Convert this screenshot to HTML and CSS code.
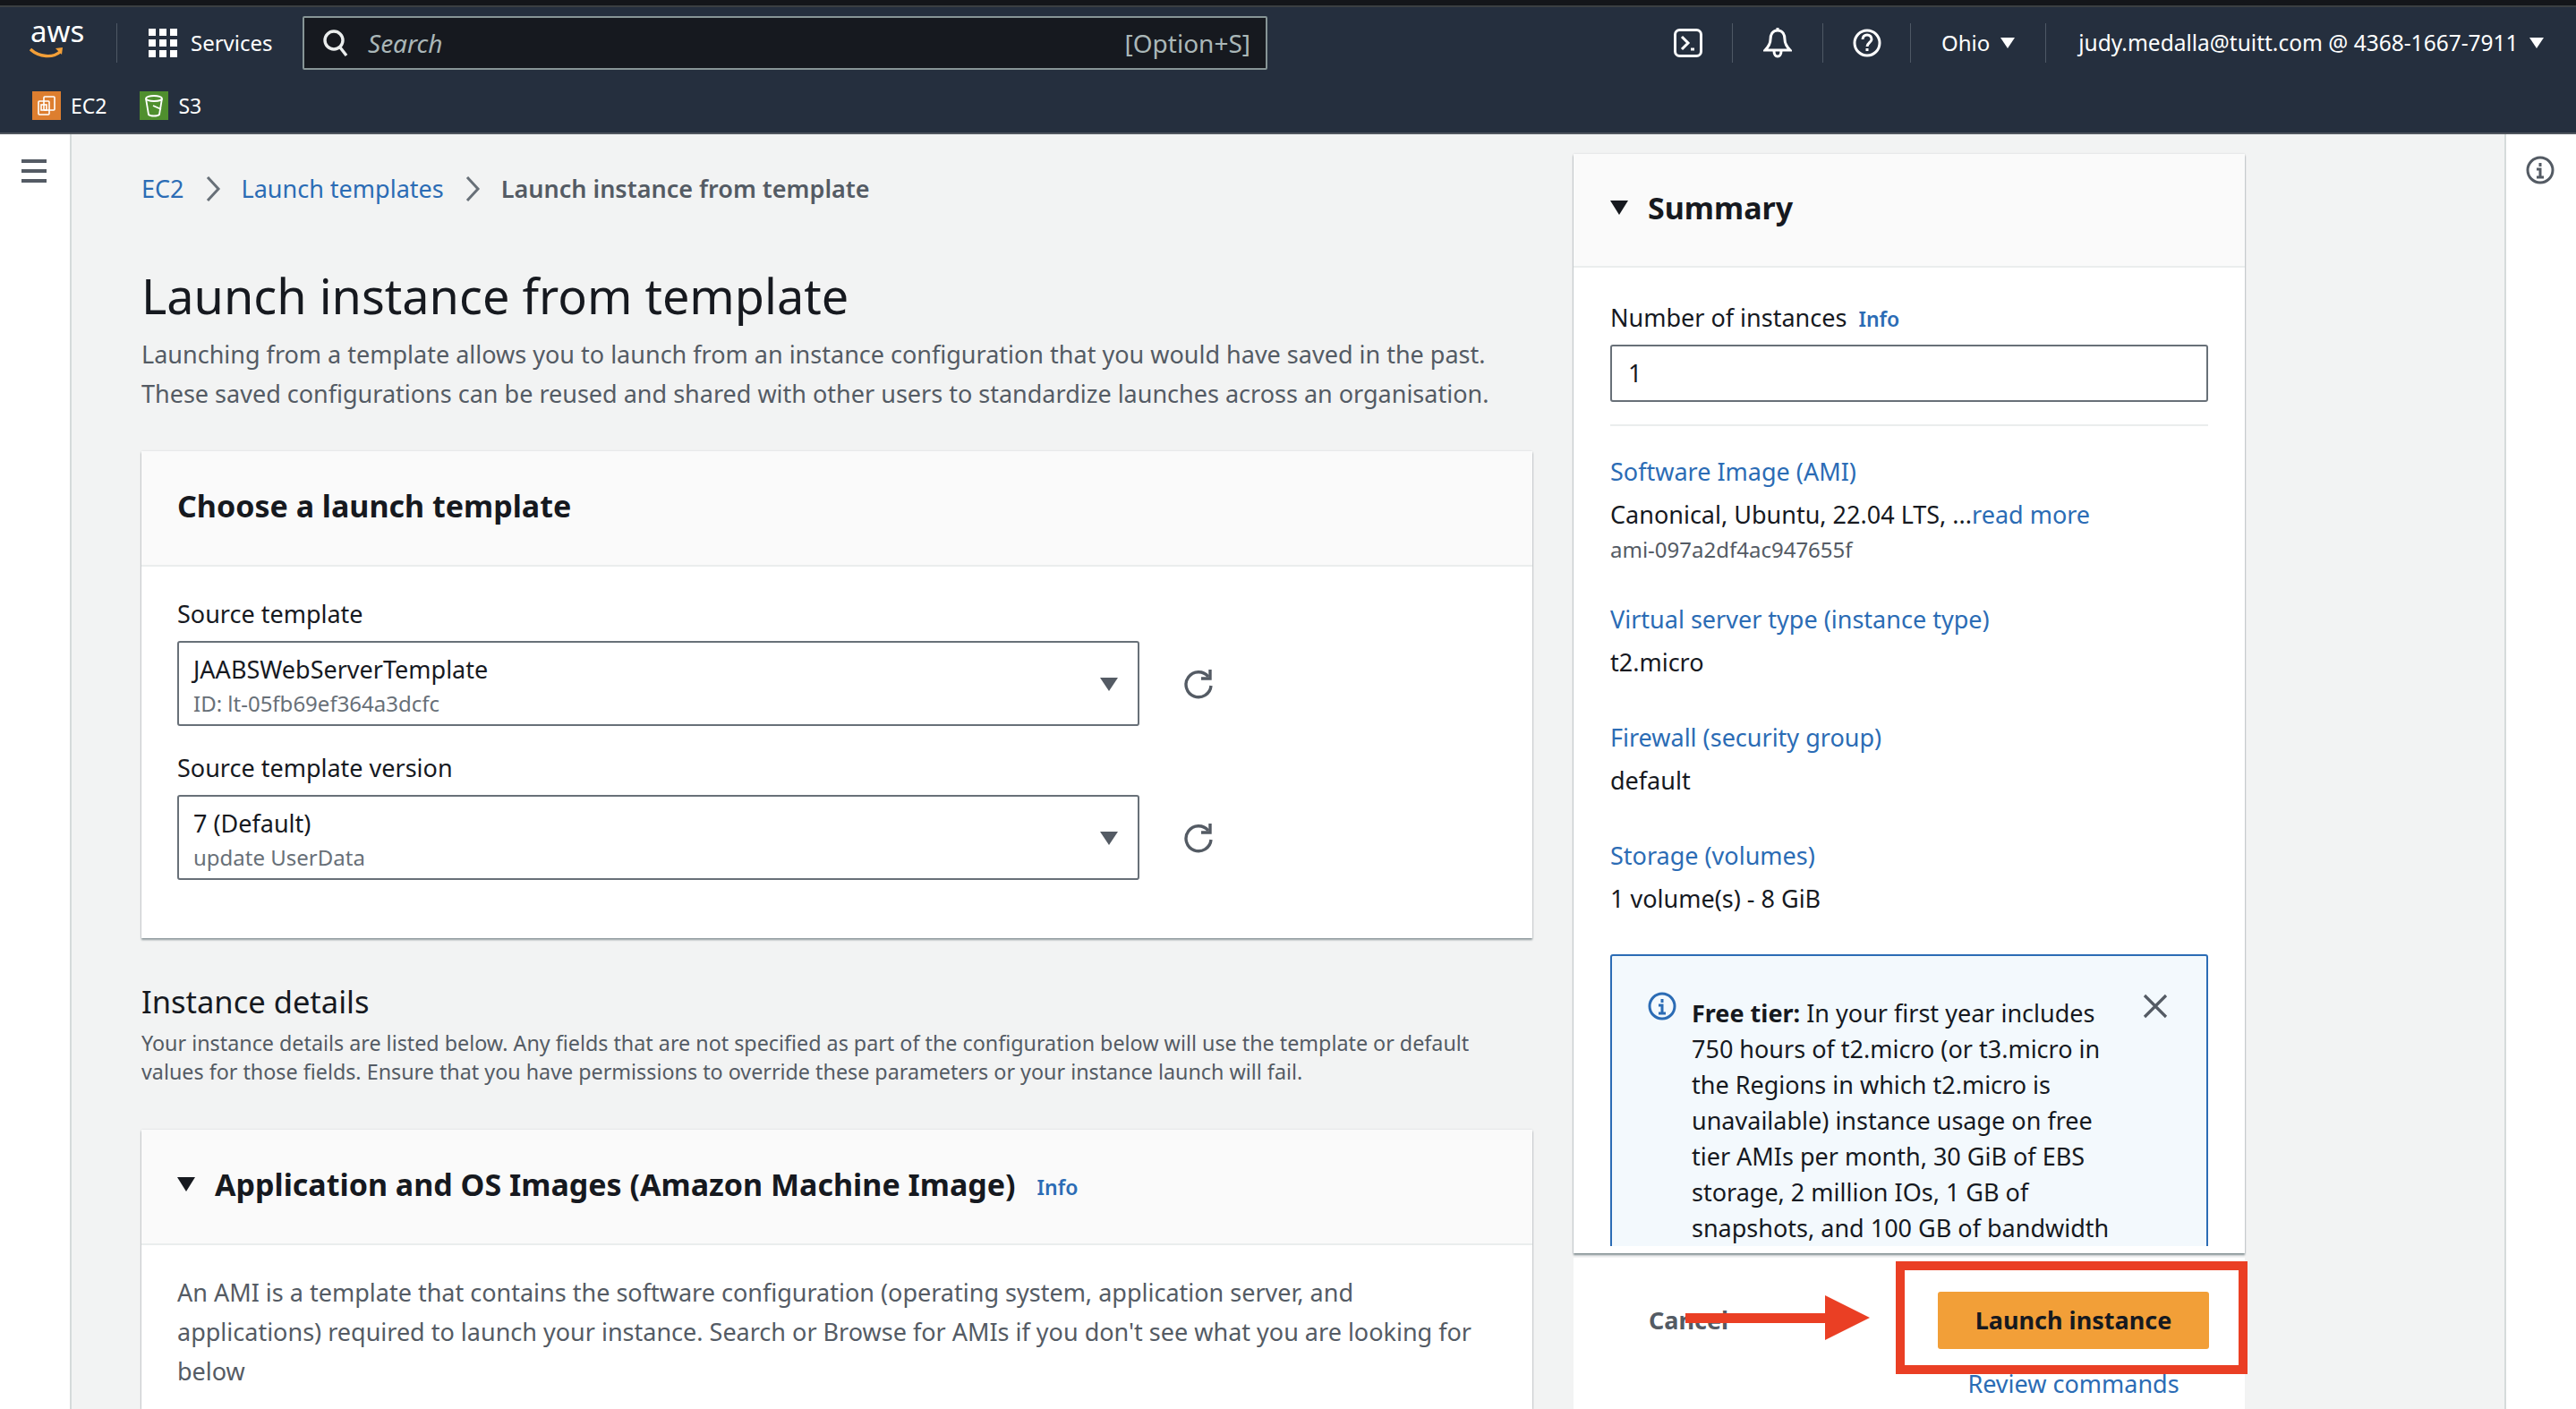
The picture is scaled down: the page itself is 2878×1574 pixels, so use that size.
FILE: index.html
```html
<!DOCTYPE html>
<html lang="en">
<head>
    <meta charset="UTF-8">
    <meta name="viewport" content="width=device-width, initial-scale=1.0">
    <title>Launch instance from template</title>
    <link rel="stylesheet" href="styles.css">
</head>
<body>

<div class="top-strip"></div>

<header class="nav">
    <div class="nav-row">
        <div class="logo">
            <span class="logo-text">aws</span>
            <svg class="logo-smile" width="38" height="16" viewBox="0 0 38 16"><path d="M1 2c10 9 25 10 33 3" fill="none" stroke="#f29f38" stroke-width="3.4"/><path d="M29 1l8-1-1 8z" fill="#f29f38"/></svg>
        </div>
        <svg class="grid-icon" width="33" height="32" viewBox="0 0 33 32" fill="#fff"><rect x="0" y="0" width="8" height="8"/><rect x="12" y="0" width="8" height="8"/><rect x="24" y="0" width="8" height="8"/><rect x="0" y="12" width="8" height="8"/><rect x="12" y="12" width="8" height="8"/><rect x="24" y="12" width="8" height="8"/><rect x="0" y="24" width="8" height="8"/><rect x="12" y="24" width="8" height="8"/><rect x="24" y="24" width="8" height="8"/></svg>
        <span class="services">Services</span>
        <div class="search">
            <svg width="30" height="32" viewBox="0 0 30 32" fill="none" stroke="#eaeded" stroke-width="3.4"><circle cx="13" cy="13" r="10"/><path d="M20 21l7 9"/></svg>
            <span class="search-text">Search</span>
            <span class="search-key">[Option+S]</span>
        </div>
        <div class="nav-right">
            <svg class="nav-icon-term" width="32" height="32" viewBox="0 0 32 32" fill="none" stroke="#fff" stroke-width="3"><rect x="1.5" y="1.5" width="29" height="29" rx="5"/><path d="M9 9l7 7-7 7"/><path d="M19 23h4"/></svg>
            <span class="nav-sep sep-term"></span>
            <svg class="nav-icon-bell" width="32" height="34" viewBox="0 0 32 34" fill="none" stroke="#fff" stroke-width="3"><path d="M16 3c-6 0-8 5-8 10 0 5-2 8-6 12h28c-4-4-6-7-6-12 0-5-2-10-8-10z"/><path d="M12 26c0 4 2 6 4 6s4-2 4-6"/><path d="M16 0v3"/></svg>
            <span class="nav-sep sep-bell"></span>
            <svg class="nav-icon-help" width="32" height="34" viewBox="0 0 32 32" fill="none" stroke="#fff" stroke-width="3"><circle cx="16" cy="16" r="14"/><path d="M11 12c0-3 2-5 5-5s5 2 5 5-5 4-5 8"/><path d="M16 22v3"/></svg>
            <span class="nav-sep sep-help"></span>
            <span class="region">Ohio</span>
            <span class="caret-white caret-region"></span>
            <span class="nav-sep sep-region"></span>
            <span class="account">judy.medalla@tuitt.com @ 4368-1667-7911</span>
            <span class="caret-white caret-account"></span>
        </div>
    </div>
    <div class="fav-row">
        <span class="fav-icon fav-ec2">
            <svg width="24" height="24" viewBox="0 0 24 24" fill="none" stroke="#fff" stroke-width="1.6"><rect x="9" y="2" width="12" height="15" rx="1"/><rect x="3" y="7" width="12" height="15" rx="1"/><rect x="6" y="11" width="6" height="6"/></svg>
        </span>
        <span class="fav-label">EC2</span>
        <span class="fav-icon fav-s3">
            <svg width="24" height="26" viewBox="0 0 24 26" fill="none" stroke="#fff" stroke-width="1.8"><ellipse cx="12" cy="5" rx="9" ry="3"/><path d="M3 5l3 18c2 2 10 2 12 0l3-18"/><path d="M11 13l9 4"/></svg>
        </span>
        <span class="fav-label">S3</span>
    </div>
</header>

<div class="layout">
    <aside class="rail rail-left">
        <svg class="rail-icon" width="28" height="28" viewBox="0 0 28 28" fill="#545b64"><rect y="0" width="28" height="4"/><rect y="11" width="28" height="4"/><rect y="22" width="28" height="4"/></svg>
    </aside>

    <main class="content">
        <nav class="breadcrumb">
            <a class="link">EC2</a>
            <svg class="crumb-sep" width="18" height="30" viewBox="0 0 18 30" fill="none" stroke="#687078" stroke-width="3"><path d="M3 2l12 13L3 28"/></svg>
            <a class="link">Launch templates</a>
            <svg class="crumb-sep" width="18" height="30" viewBox="0 0 18 30" fill="none" stroke="#687078" stroke-width="3"><path d="M3 2l12 13L3 28"/></svg>
            <span class="crumb-current">Launch instance from template</span>
        </nav>

        <h1>Launch instance from template</h1>
        <p class="intro">Launching from a template allows you to launch from an instance configuration that you would have saved in the past.<br>These saved configurations can be reused and shared with other users to standardize launches across an organisation.</p>

        <section class="card card-template">
            <div class="card-header">
                <h2 class="card-title">Choose a launch template</h2>
            </div>
            <div class="card-body">
                <div class="field-label">Source template</div>
                <div class="select-row">
                    <div class="select">
                        <div class="select-main">JAABSWebServerTemplate</div>
                        <div class="select-sub">ID: lt-05fb69ef364a3dcfc</div>
                        <span class="caret-grey"></span>
                    </div>
                    <svg class="refresh" width="34" height="36" viewBox="0 0 34 36" fill="none" stroke="#545b64" stroke-width="3.4"><path d="M27 10a14 14 0 1 0 3 10"/><path d="M29 2v10H19"/></svg>
                </div>
                <div class="field-label label-second">Source template version</div>
                <div class="select-row">
                    <div class="select">
                        <div class="select-main">7 (Default)</div>
                        <div class="select-sub">update UserData</div>
                        <span class="caret-grey"></span>
                    </div>
                    <svg class="refresh" width="34" height="36" viewBox="0 0 34 36" fill="none" stroke="#545b64" stroke-width="3.4"><path d="M27 10a14 14 0 1 0 3 10"/><path d="M29 2v10H19"/></svg>
                </div>
            </div>
        </section>

        <h2 class="section-title">Instance details</h2>
        <p class="section-desc">Your instance details are listed below. Any fields that are not specified as part of the configuration below will use the template or default<br>values for those fields. Ensure that you have permissions to override these parameters or your instance launch will fail.</p>

        <section class="card card-ami">
            <div class="card-header">
                <span class="caret-black"></span>
                <h2 class="card-title">Application and OS Images (Amazon Machine Image)</h2>
                <a class="info-link info-ami">Info</a>
            </div>
            <div class="card-body">
                <p class="ami-text">An AMI is a template that contains the software configuration (operating system, application server, and<br>applications) required to launch your instance. Search or Browse for AMIs if you don't see what you are looking for<br>below</p>
            </div>
        </section>
    </main>

    <aside class="summary-col">
        <section class="summary">
            <div class="summary-header">
                <span class="caret-black"></span>
                <h2 class="summary-title">Summary</h2>
            </div>
            <div class="summary-scroll">
                <div class="field-label">Number of instances <a class="info-link">Info</a></div>
                <div class="number-input">1</div>
                <hr class="summary-rule">

                <a class="link summary-link link-first">Software Image (AMI)</a>
                <div class="summary-value">Canonical, Ubuntu, 22.04 LTS, ...<a class="link">read more</a></div>
                <div class="summary-sub">ami-097a2df4ac947655f</div>

                <a class="link summary-link link-type">Virtual server type (instance type)</a>
                <div class="summary-value">t2.micro</div>

                <a class="link summary-link link-next">Firewall (security group)</a>
                <div class="summary-value">default</div>

                <a class="link summary-link link-next">Storage (volumes)</a>
                <div class="summary-value">1 volume(s) - 8 GiB</div>

                <div class="free-tier">
                    <svg class="free-icon" width="32" height="32" viewBox="0 0 32 32" fill="none" stroke="#2b6cb5" stroke-width="3"><circle cx="16" cy="16" r="14"/><path d="M16 8v4" /><path d="M12 15h4v9M12 24h8"/></svg>
                    <p class="free-text"><b>Free tier:</b> In your first year includes<br>750 hours of t2.micro (or t3.micro in<br>the Regions in which t2.micro is<br>unavailable) instance usage on free<br>tier AMIs per month, 30 GiB of EBS<br>storage, 2 million IOs, 1 GB of<br>snapshots, and 100 GB of bandwidth</p>
                    <svg class="free-close" width="28" height="28" viewBox="0 0 28 28" fill="none" stroke="#545b64" stroke-width="3.2"><path d="M2 2l24 24M26 2L2 26"/></svg>
                </div>
            </div>
        </section>
        <div class="summary-footer">
            <div class="footer-row">
                <span class="cancel">Cancel</span>
                <button class="launch">Launch instance</button>
            </div>
            <a class="link review">Review commands</a>
        </div>
    </aside>

    <aside class="rail rail-right">
        <svg class="rail-icon" width="32" height="32" viewBox="0 0 32 32" fill="none" stroke="#545b64" stroke-width="3"><circle cx="16" cy="16" r="14"/><path d="M16 8v4"/><path d="M12 15h4v9M12 24h8"/></svg>
    </aside>
</div>

<!-- red annotation drawn over the screenshot -->
<div class="note-box"></div>
<svg class="note-arrow" width="206" height="50" viewBox="0 0 206 50" fill="#ea3f24"><rect x="0" y="20" width="157" height="11"/><polygon points="156,0 206,25 156,50"/></svg>

</body>
</html>
```

FILE: styles.css
```css
* {
    box-sizing: border-box;
}
html, body {
    margin: 0;
    height: 1574px;
    overflow: hidden;
}
body {
    position: relative;
    font-family: "Noto Sans", Arial, sans-serif;
    font-size: 27px;
    line-height: 44px;
    color: #16191f;
    background-color: #f2f3f3;
}
h1, h2, p {
    margin: 0;
    font-weight: normal;
}
.link {
    color: #2b6cb5;
}

/* top bar */
.top-strip {
    height: 8px;
    background-color: #14161a;
    border-bottom: 2px solid #3b3f42;
}
.nav {
    height: 142px;
    background-color: #252f3e;
    border-bottom: 2px solid #50565e;
    color: #fff;
}
.nav-row {
    display: flex;
    align-items: center;
    height: 76px;
    padding: 4px 0 0 0;
}
.logo {
    position: relative;
    width: 131px;
    height: 44px;
    margin-left: 0;
    border-right: 1px solid #4e5865;
}
.logo-text {
    position: absolute;
    left: 34px;
    top: -11px;
    font-size: 33px;
    line-height: 40px;
}
.logo-smile {
    position: absolute;
    left: 33px;
    top: 27px;
}
.grid-icon {
    margin-left: 35px;
}
.services {
    margin-left: 14px;
    width: 125px;
    font-size: 24px;
}
.search {
    display: flex;
    align-items: center;
    width: 1078px;
    height: 60px;
    padding: 0 17px 0 20px;
    background-color: #16191f;
    border: 2px solid #879596;
    border-radius: 2px;
}
.search-text {
    margin-left: 21px;
    font-style: italic;
    font-size: 28px;
    color: #aab7b8;
}
.search-key {
    margin-left: auto;
    font-size: 28px;
    color: #aab7b8;
}
.nav-right {
    display: flex;
    align-items: center;
    margin-left: 454px;
    font-size: 24px;
}
.nav-sep {
    width: 1px;
    height: 44px;
    background-color: #4e5865;
}
.sep-term {
    margin-left: 33px;
}
.nav-icon-bell {
    margin-left: 34px;
}
.sep-bell {
    margin-left: 34px;
}
.nav-icon-help {
    margin-left: 33px;
}
.sep-help {
    margin-left: 32px;
}
.region {
    margin-left: 34px;
}
.caret-region {
    margin-left: 12px;
}
.sep-region {
    margin-left: 34px;
}
.account {
    margin-left: 36px;
    font-size: 24.5px;
    white-space: nowrap;
}
.caret-account {
    margin-left: 12px;
}
.caret-white {
    width: 0;
    height: 0;
    border-left: 8px solid transparent;
    border-right: 8px solid transparent;
    border-top: 12px solid #fff;
}
.fav-row {
    display: flex;
    align-items: center;
    height: 32px;
    margin-top: 18px;
    padding-left: 36px;
    font-size: 23px;
}
.fav-icon {
    display: flex;
    align-items: center;
    justify-content: center;
    width: 32px;
    height: 32px;
}
.fav-ec2 {
    background-color: #dd7e2f;
}
.fav-s3 {
    background-color: #4f8f2e;
}
.fav-label {
    margin-left: 11px;
    margin-right: 37px;
}

/* page columns */
.layout {
    display: flex;
    height: 1424px;
}
.rail {
    background-color: #fff;
    flex: none;
}
.rail-icon {
    display: block;
}
.rail-left {
    width: 80px;
    padding: 28px 0 0 24px;
    border-right: 2px solid #d5dbdb;
}
.rail-right {
    width: 80px;
    margin-left: 290px;
    padding: 24px 0 0 22px;
    border-left: 2px solid #d5dbdb;
}
.content {
    flex: none;
    width: 1632px;
    padding-left: 78px;
    padding-top: 39px;
}

/* breadcrumb and heading */
.breadcrumb {
    display: flex;
    align-items: center;
    height: 44px;
    white-space: nowrap;
}
.crumb-sep {
    margin: 0 23px;
}
.crumb-current {
    font-weight: 600;
    color: #545b64;
}
h1 {
    margin-top: 61px;
    font-size: 54px;
    line-height: 72px;
}
.intro {
    margin-top: 8px;
    color: #545b64;
    white-space: nowrap;
}

/* cards */
.card {
    width: 1554px;
    background-color: #fff;
    box-shadow: 0 2px 2px rgba(0, 28, 36, 0.4), 0 0 2px rgba(0, 28, 36, 0.12);
}
.card-template {
    margin-top: 42px;
    height: 544px;
}
.card-ami {
    margin-top: 49px;
    height: 312px;
}
.card-header {
    display: flex;
    align-items: center;
    height: 129px;
    padding: 0 40px 6px;
    background-color: #fafafa;
    border-bottom: 2px solid #eaeded;
}
.card-title {
    font-size: 34px;
    font-weight: 700;
    line-height: 50px;
}
.card-body {
    padding: 31px 40px;
}
.caret-black {
    flex: none;
    width: 0;
    height: 0;
    border-left: 10px solid transparent;
    border-right: 10px solid transparent;
    border-top: 16px solid #16191f;
}
.card-ami .caret-black {
    margin-right: 22px;
}
.info-link {
    color: #2b6cb5;
    font-size: 23px;
    font-weight: 600;
    margin-left: 6px;
}
.info-ami {
    margin-left: 24px;
    margin-top: 6px;
}
.field-label {
    line-height: 44px;
}
.label-second {
    margin-top: 25px;
}
.select-row {
    display: flex;
    align-items: center;
    margin-top: 8px;
}
.select {
    position: relative;
    width: 1075px;
    height: 95px;
    padding: 12px 16px 0;
    border: 2px solid #687078;
    border-radius: 3px;
}
.select-main {
    line-height: 36px;
}
.select-sub {
    margin-top: 4px;
    font-size: 24px;
    line-height: 32px;
    color: #687078;
}
.caret-grey {
    position: absolute;
    right: 22px;
    top: 39px;
    width: 0;
    height: 0;
    border-left: 10px solid transparent;
    border-right: 10px solid transparent;
    border-top: 15px solid #545b64;
}
.refresh {
    margin-left: 50px;
}
.section-title {
    margin-top: 46px;
    font-size: 34.5px;
    line-height: 50px;
}
.section-desc {
    margin-top: 5px;
    font-size: 23.3px;
    line-height: 32px;
    color: #545b64;
    white-space: nowrap;
}
.ami-text {
    color: #545b64;
    white-space: nowrap;
}

/* summary column */
.summary-col {
    flex: none;
    width: 750px;
    margin-left: 46px;
    padding-top: 22px;
}
.summary {
    height: 1228px;
    background-color: #fff;
    box-shadow: 0 2px 2px rgba(0, 28, 36, 0.45), 0 0 2px rgba(0, 28, 36, 0.12);
}
.summary-header {
    display: flex;
    align-items: center;
    height: 127px;
    padding: 0 41px 6px;
    background-color: #fafafa;
    border-bottom: 2px solid #eaeded;
}
.summary-title {
    margin-left: 22px;
    font-size: 34px;
    font-weight: 700;
    line-height: 50px;
}
.summary-scroll {
    height: 1093px;
    padding: 34px 41px 0;
    overflow: hidden;
}
.number-input {
    height: 64px;
    margin-top: 7px;
    padding-left: 18px;
    line-height: 60px;
    border: 2px solid #687078;
    border-radius: 3px;
}
.summary-rule {
    height: 2px;
    margin: 25px 0 0;
    border: none;
    background-color: #eaeded;
}
.summary-link {
    display: block;
}
.link-first {
    margin-top: 29px;
}
.link-type {
    margin-top: 40px;
}
.link-next {
    margin-top: 40px;
}
.summary-value {
    margin-top: 4px;
    white-space: nowrap;
}
.summary-sub {
    margin-top: 1px;
    font-size: 24px;
    line-height: 32px;
    color: #545b64;
}
.free-tier {
    display: flex;
    margin-top: 40px;
    height: 400px;
    padding: 40px 0 0 40px;
    background-color: #f3f9fd;
    border: 2px solid #2b6cb5;
    border-radius: 3px;
}
.free-icon {
    flex: none;
    margin-right: 17px;
}
.free-text {
    line-height: 40px;
    white-space: nowrap;
    margin-top: 4px;
    width: 500px;
}
.free-close {
    flex: none;
    margin-left: 4px;
    margin-top: 2px;
}
.summary-footer {
    margin-top: 5px;
    height: 169px;
    background-color: #fff;
    text-align: center;
}
.footer-row {
    display: flex;
    align-items: center;
    height: 102px;
    padding: 37px 40px 0 84px;
}
.cancel {
    font-weight: 700;
    color: #545b64;
    font-size: 27px;
}
.launch {
    width: 303px;
    height: 64px;
    margin-left: auto;
    font-family: "Noto Sans", Arial, sans-serif;
    font-size: 27px;
    font-weight: 700;
    color: #16191f;
    background-color: #f29f38;
    border: none;
    border-radius: 3px;
}
.review {
    display: block;
    margin-top: 17px;
    margin-left: 345px;
    text-align: center;
    width: 427px;
    white-space: nowrap;
}

/* annotation */
.note-box {
    position: absolute;
    left: 2118px;
    top: 1409px;
    width: 393px;
    height: 126px;
    border: 10px solid #ea3f24;
}
.note-arrow {
    position: absolute;
    left: 1883px;
    top: 1447px;
}
```
